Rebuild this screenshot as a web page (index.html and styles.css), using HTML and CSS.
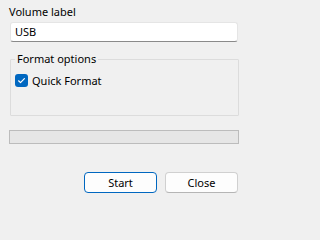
FILE: index.html
```html
<!DOCTYPE html>
<html>
<head>
<meta charset="utf-8">
<link rel="stylesheet" href="styles.css">
</head>
<body>
<div class="dialog">
  <div class="label">Volume label</div>
  <div class="input">USB</div>
  <fieldset class="group">
    <legend>Format options</legend>
    <div class="check-row">
      <span class="checkbox"><svg width="13" height="13" viewBox="0 0 13 13"><path d="M3.6 6.8 L5.5 8.6 L9.4 4.6" fill="none" stroke="#fff" stroke-width="1.2" stroke-linecap="round" stroke-linejoin="round"/></svg></span>
      <span class="check-text">Quick Format</span>
    </div>
  </fieldset>
  <div class="progress"></div>
  <div class="buttons">
    <div class="btn btn-default">Start</div>
    <div class="btn">Close</div>
  </div>
</div>
</body>
</html>
```
FILE: styles.css
```css
html, body {
  margin: 0;
  padding: 0;
  background: #f0f0f0;
}
body {
  font-family: "Segoe UI", "Noto Sans", "Open Sans", sans-serif;
  font-size: 11px;
  color: #000;
}
.dialog {
  width: 230px;
  padding-left: 9px;
  display: flex;
  flex-direction: column;
}
.label {
  margin-top: 4px;
  line-height: 16px;
}
.input {
  margin-top: 2px;
  margin-left: 1px;
  width: 228px;
  height: 20px;
  box-sizing: border-box;
  background: #fff;
  border: 1px solid #e5e5e5;
  border-bottom: 1px solid #8a8a8a;
  border-radius: 3px;
  padding-left: 4px;
  line-height: 18px;
}
.group {
  margin: 9px 0 0 1px;
  width: 229px;
  box-sizing: border-box;
  border: 1px solid #dcdcdc;
  border-radius: 1px;
  padding: 5px 6px 27px 4px;
}
.group legend {
  padding: 0 2px;
  margin-left: 0;
  line-height: 16px;
}
.check-row {
  display: flex;
  align-items: center;
  height: 16px;
}
.checkbox {
  width: 13px;
  height: 13px;
  background: #0067c0;
  border-radius: 3px;
  display: flex;
}
.check-text {
  margin-left: 4px;
}
.progress {
  margin-top: 14px;
  height: 14px;
  box-sizing: border-box;
  background: #e6e6e6;
  border: 1px solid #bcbcbc;
}
.buttons {
  margin-top: 28px;
  display: flex;
  justify-content: flex-end;
  gap: 8px;
  padding-right: 1px;
}
.btn {
  width: 73px;
  height: 21px;
  box-sizing: border-box;
  background: #fdfdfd;
  border: 1px solid #d0d0d0;
  border-bottom-color: #b5b5b5;
  border-radius: 4px;
  text-align: center;
  line-height: 19px;
}
.btn-default {
  border: 1px solid #0067c0;
}
```
